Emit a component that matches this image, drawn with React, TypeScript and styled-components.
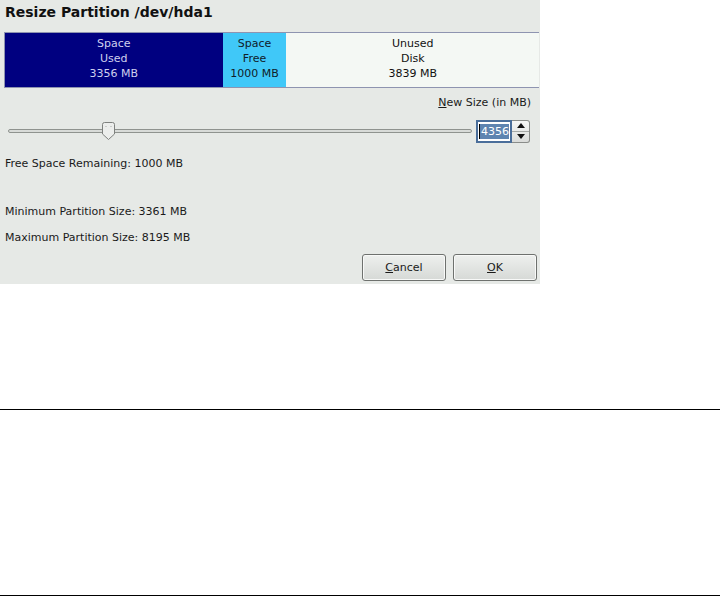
import styled, { createGlobalStyle } from 'styled-components';

const GlobalStyle = createGlobalStyle`
    html, body {
        margin: 0;
        padding: 0;
        background: #ffffff;
    }
    body {
        font-family: "DejaVu Sans", "Liberation Sans", sans-serif;
        font-size: 11px;
        color: #1a1a1a;
    }
`;

const StyledPage = styled.div`
    width: 720px;
    height: 596px;
    display: flex;
    flex-direction: column;
`;

const StyledDialog = styled.div`
    width: 540px;
    height: 284px;
    background: #e6e9e6;
    box-sizing: border-box;
    display: flex;
    flex-direction: column;
`;

const StyledTitle = styled.div`
    font-weight: bold;
    font-size: 14px;
    height: 32px;
    line-height: 24px;
    padding-left: 5px;
    color: #111;
`;

const StyledBar = styled.div`
    margin-left: 4px;
    width: 535px;
    height: 56px;
    display: flex;
    border: 1px solid #8e94b0;
    border-right: none;
    box-sizing: border-box;
`;

const StyledSegment = styled.div<{ $width: number; $bg: string; $fg: string }>`
    width: ${p => p.$width}px;
    background: ${p => p.$bg};
    color: ${p => p.$fg};
    display: flex;
    flex-direction: column;
    align-items: center;
    justify-content: center;
    line-height: 15px;
    font-size: 11px;
    padding-bottom: 4px;
`;

const StyledSizeLabel = styled.div`
    align-self: flex-end;
    margin-right: 9px;
    margin-top: 8px;
    height: 14px;
    line-height: 14px;

    u {
        text-decoration: underline;
    }
`;

const StyledSliderRow = styled.div`
    display: flex;
    align-items: center;
    margin-top: 9px;
    padding-left: 8px;
    height: 24px;
`;

const StyledTrack = styled.div`
    position: relative;
    width: 464px;
    height: 4px;
    background: #d8dbd8;
    border: 1px solid #8f938f;
    border-radius: 3px;
    box-sizing: border-box;
`;

const StyledThumb = styled.svg`
    position: absolute;
    left: 93px;
    top: -8px;
`;

const StyledSpin = styled.div`
    display: flex;
    margin-left: 4px;
    height: 23px;
`;

const StyledSpinField = styled.div`
    width: 36px;
    height: 23px;
    box-sizing: border-box;
    border: 2px solid #4a6e9a;
    background: #ffffff;
    padding: 2px 1px;
    display: flex;
    align-items: center;
    overflow: hidden;

    span {
        background: #5e84b0;
        color: #ffffff;
        line-height: 15px;
        padding: 0 0 0 1px;
        border-left: 1px solid #000;
        font-size: 11px;
        white-space: nowrap;
    }
`;

const StyledSpinButtons = styled.div`
    width: 18px;
    display: flex;
    flex-direction: column;
    border: 1px solid #8a8d8a;
    border-left: none;
    border-radius: 0 3px 3px 0;
    box-sizing: border-box;
    background: linear-gradient(#f6f7f6, #dadcda);
`;

const StyledSpinButton = styled.div<{ $down?: boolean }>`
    flex: 1;
    display: flex;
    align-items: center;
    justify-content: center;
    border-top: ${p => (p.$down ? '1px solid #a6a9a6' : 'none')};
`;

const StyledInfo = styled.div<{ $top: number }>`
    padding-left: 5px;
    margin-top: ${p => p.$top}px;
    height: 14px;
    line-height: 14px;
`;

const StyledButtonRow = styled.div`
    display: flex;
    justify-content: flex-end;
    gap: 7px;
    margin-top: 9px;
    padding-right: 3px;
`;

const StyledButton = styled.button`
    width: 84px;
    height: 27px;
    font-family: "DejaVu Sans", sans-serif;
    font-size: 11px;
    color: #1a1a1a;
    border: 1px solid #6e716e;
    border-radius: 3px;
    background: linear-gradient(#eef0ee, #d6d9d6);
    box-shadow: inset 0 0 0 1px #f8f9f8;
    padding: 0;

    u {
        text-decoration: underline;
    }
`;

const StyledRule = styled.div<{ $top: number }>`
    margin-top: ${p => p.$top}px;
    width: 720px;
    height: 1px;
    background: #000000;
`;

const segments = [
    { width: 218, bg: '#000080', fg: '#cfd0ee', lines: ['Space', 'Used', '3356 MB'] },
    { width: 64, bg: '#40c8f8', fg: '#10202a', lines: ['Space', 'Free', '1000 MB'] },
    { width: 253, bg: '#f4f8f4', fg: '#111', lines: ['Unused', 'Disk', '3839 MB'] },
];

const App = () => {
    return (
        <StyledPage>
            <GlobalStyle />
            <StyledDialog>
                <StyledTitle>Resize Partition /dev/hda1</StyledTitle>
                <StyledBar>
                    {segments.map(s => (
                        <StyledSegment key={s.lines[0] + s.lines[1]} $width={s.width} $bg={s.bg} $fg={s.fg}>
                            {s.lines.map(l => <div key={l}>{l}</div>)}
                        </StyledSegment>
                    ))}
                </StyledBar>
                <StyledSizeLabel><u>N</u>ew Size (in MB)</StyledSizeLabel>
                <StyledSliderRow>
                    <StyledTrack>
                        <StyledThumb width="13" height="18" viewBox="0 0 13 18">
                            <path d="M2.5 0.5 H10.5 Q12.5 0.5 12.5 2.5 V12 L6.5 17.5 L0.5 12 V2.5 Q0.5 0.5 2.5 0.5 Z"
                                fill="#eceeec" stroke="#7e817e" />
                            <path d="M4 4 v1 M9 4 v1" stroke="#a8aba8" />
                        </StyledThumb>
                    </StyledTrack>
                    <StyledSpin>
                        <StyledSpinField><span>4356</span></StyledSpinField>
                        <StyledSpinButtons>
                            <StyledSpinButton>
                                <svg width="8" height="5" viewBox="0 0 8 5"><path d="M0 5 L4 0 L8 5 Z" fill="#111" /></svg>
                            </StyledSpinButton>
                            <StyledSpinButton $down>
                                <svg width="8" height="5" viewBox="0 0 8 5"><path d="M0 0 L8 0 L4 5 Z" fill="#111" /></svg>
                            </StyledSpinButton>
                        </StyledSpinButtons>
                    </StyledSpin>
                </StyledSliderRow>
                <StyledInfo $top={14}>Free Space Remaining: 1000 MB</StyledInfo>
                <StyledInfo $top={34}>Minimum Partition Size: 3361 MB</StyledInfo>
                <StyledInfo $top={12}>Maximum Partition Size: 8195 MB</StyledInfo>
                <StyledButtonRow>
                    <StyledButton><u>C</u>ancel</StyledButton>
                    <StyledButton><u>O</u>K</StyledButton>
                </StyledButtonRow>
            </StyledDialog>
            <StyledRule $top={125} />
            <StyledRule $top={185} />
        </StyledPage>
    );
};

export default App;
